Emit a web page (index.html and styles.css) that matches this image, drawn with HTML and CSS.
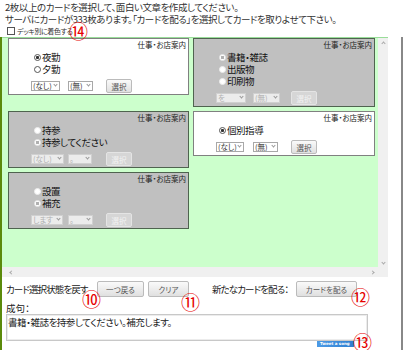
FILE: index.html
```html
<!DOCTYPE html>
<html lang="ja">
<head>
    <meta charset="UTF-8">
    <meta name="viewport" content="width=device-width, initial-scale=1.0">
    <title>カードで文章作成</title>
    <link rel="stylesheet" href="styles.css">
</head>
<body>
<div class="page">
    <div class="intro">
        <p>2枚以上のカードを選択して、面白い文章を作成してください。</p>
        <p>サーバにカードが333枚あります。「カードを配る」を選択してカードを取りよせて下さい。</p>
        <label class="deck"><input type="checkbox">デッキ別に着色する</label>
    </div>

    <div class="board">
        <div class="frame">
            <div class="cards">
                <div class="card">
                    <div class="card-head">仕事・お店案内</div>
                    <label class="opt"><input type="radio" name="c1" checked>夜勤</label>
                    <label class="opt"><input type="radio" name="c1">夕勤</label>
                    <div class="ctrls">
                        <div class="sels">
                            <span class="sel"><select style="width:29px"><option>(なし)</option></select></span>
                            <span class="sel"><select style="width:25px"><option>(無)</option></select></span>
                        </div>
                        <button class="btn pick">選択</button>
                    </div>
                </div>

                <div class="card off">
                    <div class="card-head">仕事・お店案内</div>
                    <label class="opt"><input type="radio" name="c2" checked disabled>書籍・雑誌</label>
                    <label class="opt"><input type="radio" name="c2" disabled>出版物</label>
                    <label class="opt"><input type="radio" name="c2" disabled>印刷物</label>
                    <div class="ctrls">
                        <div class="sels">
                            <span class="sel"><select style="width:30px" disabled><option>を</option></select></span>
                            <span class="sel"><select style="width:27px" disabled><option>(無)</option></select></span>
                        </div>
                        <button class="btn pick" disabled>選択</button>
                    </div>
                </div>

                <div class="card off">
                    <div class="card-head">仕事・お店案内</div>
                    <label class="opt"><input type="radio" name="c3" disabled>持参</label>
                    <label class="opt"><input type="radio" name="c3" checked disabled>持参してください</label>
                    <div class="ctrls">
                        <div class="sels">
                            <span class="sel"><select style="width:33px" disabled><option>(なし)</option></select></span>
                            <span class="sel"><select style="width:24px" disabled><option>。</option></select></span>
                        </div>
                        <button class="btn pick" disabled>選択</button>
                    </div>
                </div>

                <div class="card">
                    <div class="card-head">仕事・お店案内</div>
                    <label class="opt"><input type="radio" name="c4" checked>個別指導</label>
                    <div class="ctrls">
                        <div class="sels">
                            <span class="sel"><select style="width:28px"><option>(なし)</option></select></span>
                            <span class="sel"><select style="width:25px"><option>(無)</option></select></span>
                        </div>
                        <button class="btn pick">選択</button>
                    </div>
                </div>

                <div class="card off">
                    <div class="card-head">仕事・お店案内</div>
                    <label class="opt"><input type="radio" name="c5" disabled>設置</label>
                    <label class="opt"><input type="radio" name="c5" checked disabled>補充</label>
                    <div class="ctrls">
                        <div class="sels">
                            <span class="sel"><select style="width:32px" disabled><option>します</option></select></span>
                            <span class="sel"><select style="width:25px" disabled><option>。</option></select></span>
                        </div>
                        <button class="btn pick" disabled>選択</button>
                    </div>
                </div>
            </div>
            <div class="vbar"><i class="arr up"></i><i class="arr down"></i></div>
            <div class="hbar"><i class="arr left"></i><i class="arr right"></i></div>
            <div class="corner"></div>
        </div>

        <div class="actions">
            <span class="undo-label">カード選択状態を戻す</span>
            <button class="btn back">一つ戻る</button>
            <button class="btn clear">クリア</button>
            <span class="deal-label">新たなカードを配る：</span>
            <button class="btn deal">カードを配る</button>
        </div>

        <div class="phrase-label">成句：</div>
        <textarea class="phrase">書籍・雑誌を持参してください。補充します。</textarea>
        <div class="tweet-row"><span class="tweet">Tweet a song</span></div>
    </div>

    <!-- red callout numbers -->
    <span class="mark m14">⑭</span>
    <span class="mark m10">⑩</span>
    <span class="mark m11">⑪</span>
    <span class="mark m12">⑫</span>
    <span class="mark m13">⑬</span>
</div>
</body>
</html>
```

FILE: styles.css
```css
body {
    margin: 0;
    font-family: "Noto Sans CJK JP", sans-serif;
    font-feature-settings: "palt";
    color: #222;
    background: #fff;
}
.page {
    position: relative;
    width: 403px;
    height: 350px;
    overflow: hidden;
}
.intro {
    padding: 1px 5px 0;
    font-size: 9.5px;
    letter-spacing: -0.45px;
    line-height: 12px;
    color: #333;
}
.intro p {
    margin: 0;
}
.deck {
    display: flex;
    align-items: center;
    height: 12px;
    padding-left: 2px;
    font-size: 7px;
    letter-spacing: -0.4px;
}
.deck input {
    appearance: none;
    box-sizing: border-box;
    width: 8px;
    height: 8px;
    margin: 0 2px 0 0;
    border: 1px solid #555;
    background: #fff;
}

/* board with the cards */
.board {
    height: 313px;
    border-left: 2px solid #5b8a0b;
    border-right: 2px solid #888;
}
.frame {
    display: grid;
    grid-template-columns: 376px 10px;
    grid-template-rows: 229px 10px;
    width: 386px;
    border-top: 1px solid #99dd99;
}
.cards {
    display: grid;
    grid-template-columns: 181px 182px;
    gap: 4px;
    align-items: start;
    align-content: start;
    padding: 0 3px 0 6px;
    background: #ccffcc;
}
.card {
    background: #fff;
    border: 1px solid #808080;
    padding: 0 0 1px 22px;
}
.card.off {
    background: #c0c0c0;
    border-color: #4f634f;
}
.card-head {
    font-size: 7.5px;
    line-height: 12px;
    text-align: right;
    padding-right: 2px;
    color: #222;
}
.opt {
    display: flex;
    align-items: center;
    height: 12px;
    font-size: 9.5px;
    letter-spacing: -0.45px;
    color: #111;
}
.opt input {
    appearance: none;
    box-sizing: border-box;
    width: 7px;
    height: 7px;
    margin: 0 1px 0 3px;
    border: 1px solid #555;
    border-radius: 50%;
    background: #fff;
}
.opt input:checked {
    background: radial-gradient(circle, #333 0 1.3px, #fff 1.8px);
}
.opt input:disabled {
    border-color: #ececec;
}
.opt input:disabled:checked {
    background: radial-gradient(circle, #b0b0b0 0 1.4px, #fff 1.9px);
}
.ctrls {
    display: flex;
    align-items: center;
    height: 14px;
    margin-top: 4px;
}
.sels {
    display: grid;
    grid-template-columns: 37px 38px;
}
.sel {
    position: relative;
    width: max-content;
}
.sel select {
    appearance: none;
    display: block;
    box-sizing: border-box;
    height: 10px;
    margin: 0;
    padding: 0 0 0 1px;
    border: 1px solid #a8a8a8;
    border-radius: 0;
    background: #fff;
    color: #333;
    font: 7.5px/8px "Noto Sans CJK JP", sans-serif;
    font-feature-settings: "palt";
}
.sel select:disabled {
    color: #aaa;
    border-color: #d8d8d8;
}
.sel::after {
    content: "";
    position: absolute;
    right: 3px;
    top: 2px;
    width: 2px;
    height: 2px;
    border-right: 1px solid #999;
    border-bottom: 1px solid #999;
    transform: rotate(45deg);
}
.btn {
    padding: 0;
    border: 1px solid #bbb;
    border-radius: 2px;
    background: linear-gradient(#fafafa, #e0e0e0);
    color: #555;
    font: 7.5px "Noto Sans CJK JP", sans-serif;
    font-feature-settings: "palt";
}
.pick {
    width: 26px;
    height: 14px;
}
.btn:disabled {
    background: #d6d6d6;
    border-color: #e4e4e4;
    color: #f2f2f2;
}

/* fake scrollbars of the board */
.vbar, .hbar, .corner {
    background: #f0f0f0;
}
.vbar {
    display: flex;
    flex-direction: column;
    justify-content: space-between;
    align-items: center;
    padding: 4px 0 3px;
}
.hbar {
    display: flex;
    justify-content: space-between;
    align-items: center;
    padding: 0 4px 0 8px;
}
.arr {
    width: 2px;
    height: 2px;
    border-left: 1px solid #a8a8a8;
    border-top: 1px solid #a8a8a8;
}
.arr.up { transform: rotate(45deg); }
.arr.down { transform: rotate(225deg); }
.arr.left { transform: rotate(-45deg); }
.arr.right { transform: rotate(135deg); }

/* bottom controls */
.actions {
    display: flex;
    align-items: center;
    height: 16px;
    margin: 4px 0 0 4px;
    font-size: 9.5px;
    letter-spacing: -0.9px;
    color: #222;
    white-space: nowrap;
}
.undo-label {
    width: 82px;
}
.deal-label {
    width: 80px;
    margin-left: 23px;
}
.actions .btn {
    height: 16px;
    letter-spacing: 0;
}
.back {
    width: 47px;
    margin-left: 9px;
}
.clear {
    width: 41px;
    margin-left: 4px;
}
.deal {
    width: 61px;
    margin-left: 4px;
}
.phrase-label {
    margin: 5px 0 0 4px;
    font-size: 9.5px;
    line-height: 12px;
}
.phrase {
    display: block;
    box-sizing: border-box;
    width: 362px;
    height: 27px;
    margin: 0 0 0 4px;
    padding: 1px 1px;
    border: 1px solid #c8c8c8;
    box-shadow: inset 0 0 0 1px #ececec;
    resize: none;
    font: 9.5px/12px "Noto Sans CJK JP", sans-serif;
    font-feature-settings: "palt";
    letter-spacing: -0.45px;
    color: #222;
}
.tweet-row {
    display: flex;
    height: 6px;
    padding-left: 315px;
}
.tweet {
    height: 6px;
    padding: 0 4px 0 3px;
    background: linear-gradient(90deg, #4c9be6, #2f7fd0);
    color: #fff;
    font: bold 4px/6px "DejaVu Sans", sans-serif;
    white-space: nowrap;
}

/* callouts over the page */
.mark {
    position: absolute;
    font-size: 19px;
    line-height: 15px;
    color: #e60000;
}
.m14 { left: 69px; top: 23px; }
.m10 { left: 82px; top: 291px; }
.m11 { left: 181px; top: 294px; }
.m12 { left: 351px; top: 289px; }
.m13 { left: 353px; top: 334px; }
```
